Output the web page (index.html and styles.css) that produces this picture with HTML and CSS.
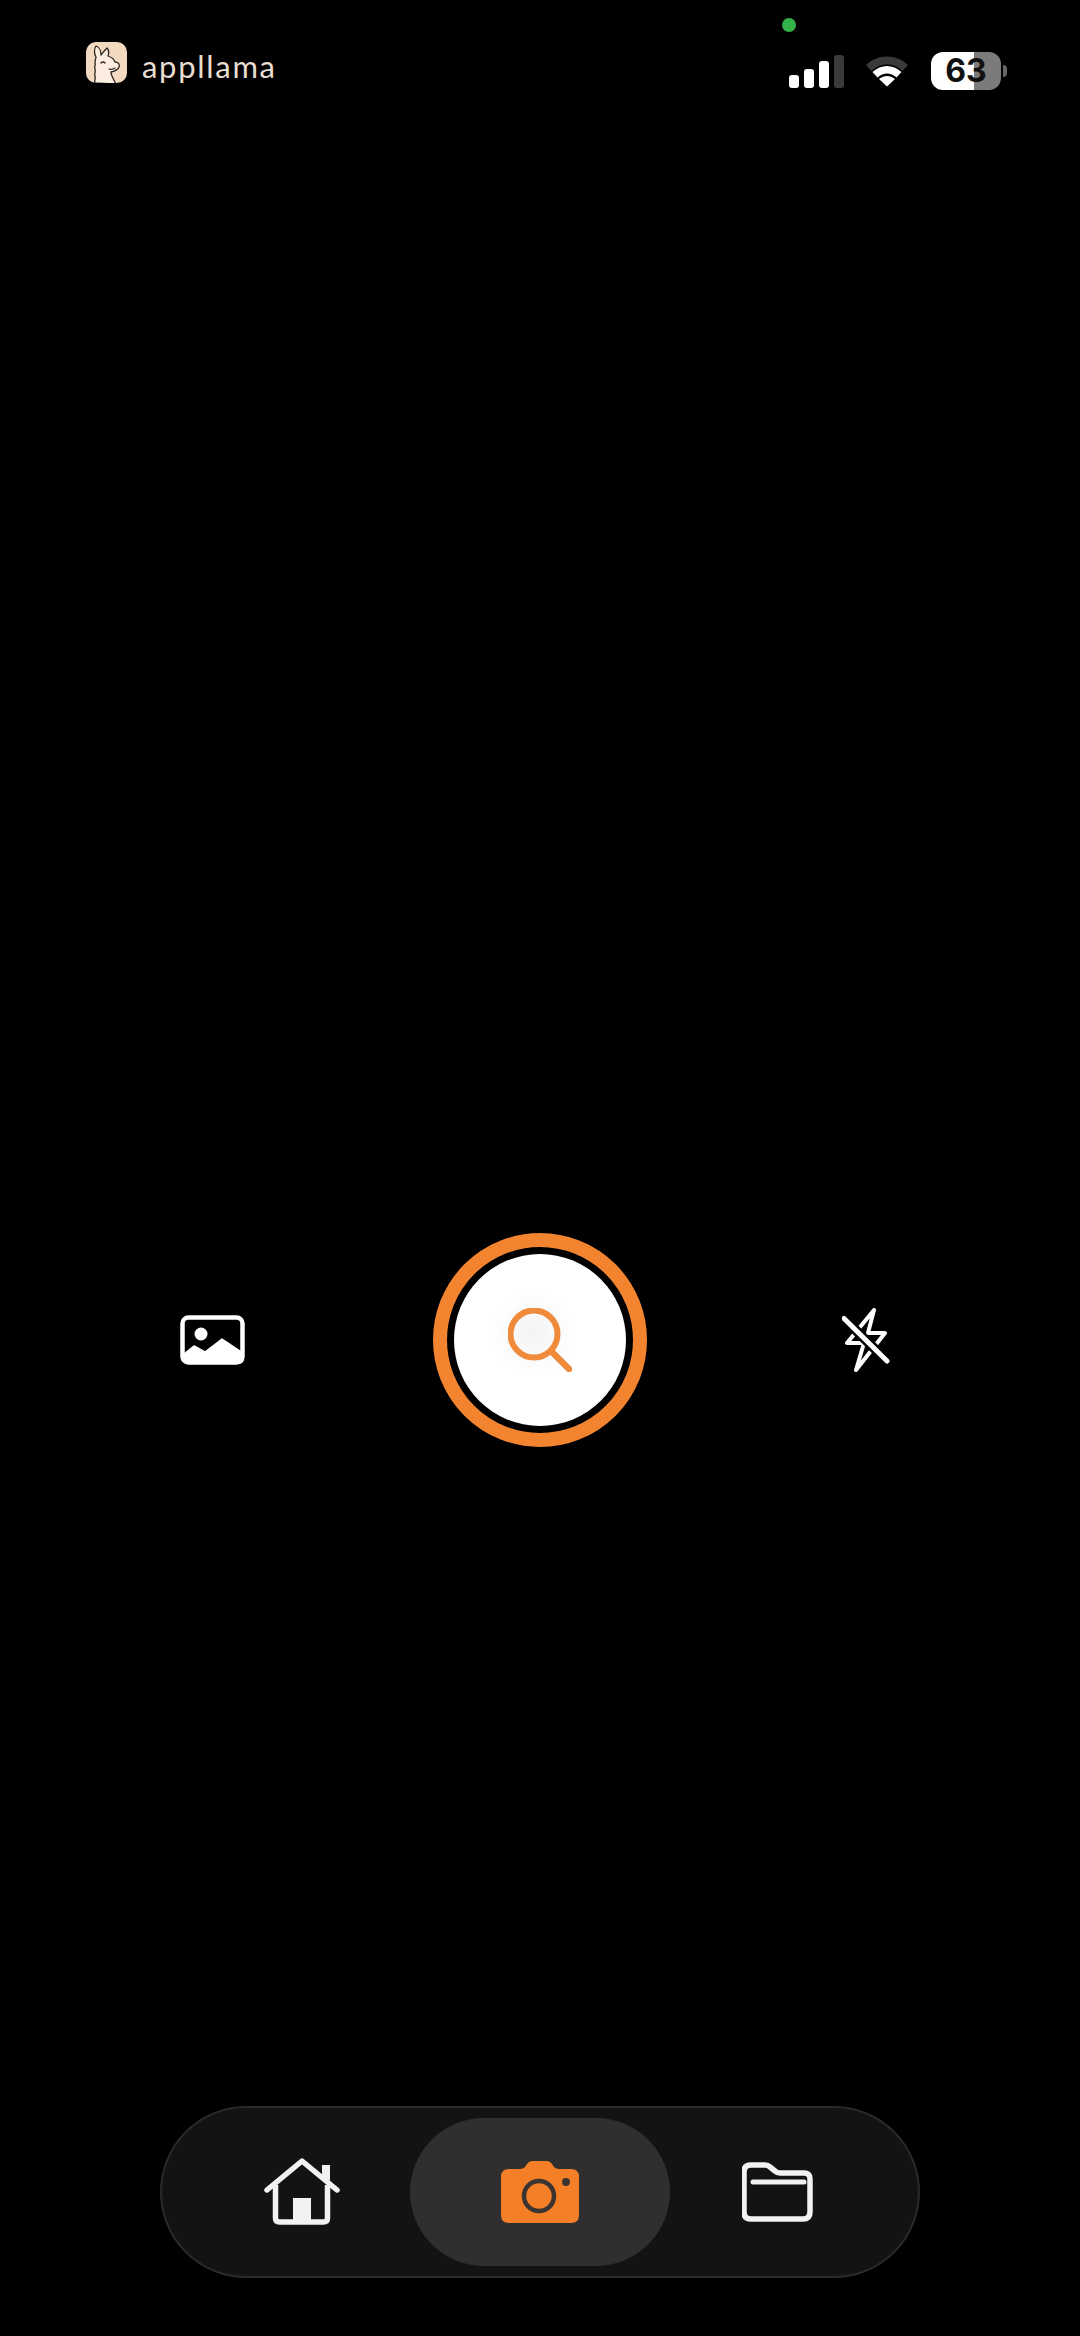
FILE: index.html
```html
<!DOCTYPE html>
<html lang="en">
  <head>
    <meta charset="UTF-8" />
    <meta name="viewport" content="width=device-width, initial-scale=1.0" />
    <title>appllama</title>
    <link rel="stylesheet" href="styles.css">
  </head>
  <body>
    <div class="screen">
      <header class="statusbar">
        <div class="brand">
          <svg class="brand-icon" width="41" height="41" viewBox="0 0 41 41">
            <rect width="41" height="41" rx="10" fill="#f3d9c0" />
            <path d="M9 41c-1-3 1-4 0-7c-1-3 1-4 0-7c-1-3 1-4 0-6c0-3 1-5 1-6c-2-3-2-8 0-11c3 1 5 5 5 9c1-1 3-4 6-7c2 2 2 5 1 8c3 1 6 3 7 6c3 0 5 2 4 5c-1 3-4 4-8 5c0 4 3 8 5 12z" fill="#fbeee0" stroke="#2e2620" stroke-width="1.300" stroke-linejoin="round" />
            <path d="M15 21q2-2 4 0M23 27q3 1 6-1" fill="none" stroke="#2e2620" stroke-width="1.300" stroke-linecap="round" />
          </svg>
          <span class="brand-name">appllama</span>
        </div>
        <div class="indicators">
          <span class="privacy-dot"></span>
          <div class="signal">
            <span class="bar bar-1"></span>
            <span class="bar bar-2"></span>
            <span class="bar bar-3"></span>
            <span class="bar bar-4"></span>
          </div>
          <svg class="wifi" width="46" height="33" viewBox="0 4 46 32">
            <path d="M2 13.500C14 2 32 2 44 13.500L38.500 19.500C29 10.500 17 10.500 7.500 19.500z" fill="#3a3a3a" />
            <path d="M8.500 20.500C17 12.500 29 12.500 37.500 20.500L32.500 26C26.500 20.500 19.500 20.500 13.500 26z" fill="#fff" />
            <path d="M15 27.500C20 23.500 26 23.500 31 27.500L23 35z" fill="#fff" />
          </svg>
          <div class="battery">
            <div class="battery-body"><span class="battery-level">63</span></div>
            <span class="battery-cap"></span>
          </div>
        </div>
      </header>

      <main class="controls">
        <button class="tool">
          <svg width="66" height="50" viewBox="0 0 66 50">
            <rect x="2.500" y="2.500" width="60" height="45" rx="6" fill="none" stroke="#fff" stroke-width="4.500" />
            <circle cx="21" cy="19" r="6.500" fill="#fff" />
            <path d="M4 39l10-8 11 6 17-13 21 14v6q0 4-4 4H8q-4 0-4-4z" fill="#fff" stroke="#fff" stroke-width="1.500" stroke-linejoin="round" />
          </svg>
        </button>
        <button class="shutter">
          <span class="shutter-face">
            <svg width="64" height="64" viewBox="0 0 64 64">
              <circle cx="26" cy="26" r="23.500" fill="none" stroke="#f08b3c" stroke-width="6" />
              <path d="M43 43l18 18" fill="none" stroke="#f08b3c" stroke-width="6.500" stroke-linecap="round" />
            </svg>
          </span>
        </button>
        <button class="tool tool-flash">
          <svg width="48" height="64" viewBox="0 0 48 64">
            <path d="M32 2L5 35h17L14 62l29-37H26z" fill="none" stroke="#fff" stroke-width="4" stroke-linejoin="round" />
            <path d="M1.500 10L45 53" fill="none" stroke="#000" stroke-width="10" />
            <path d="M2 10.500L45 53" fill="none" stroke="#fff" stroke-width="5" stroke-linecap="round" />
          </svg>
        </button>
      </main>

      <nav class="tabbar">
        <a class="tab">
          <svg width="76" height="68" viewBox="0 0 76 68">
            <path d="M3 32L38 3l35 29" fill="none" stroke="#f2f2f2" stroke-width="5.500" stroke-linecap="round" stroke-linejoin="round" />
            <path d="M11.500 27v33q0 4 4 4h44q4 0 4-4V27" fill="none" stroke="#f2f2f2" stroke-width="5.500" />
            <path d="M58 17V7h8v16z" fill="#f2f2f2" />
            <rect x="29" y="40" width="18" height="25" fill="#f2f2f2" />
          </svg>
        </a>
        <a class="tab tab-active">
          <svg width="78" height="62" viewBox="0 0 78 62">
            <path d="M8 8h11q3 0 5-2l2-3q2-3 6-3h13q4 0 6 3l2 3q2 2 5 2h12q8 0 8 8v38q0 8-8 8H8q-8 0-8-8V16q0-8 8-8z" fill="#f47f26" />
            <circle cx="38" cy="35" r="15" fill="none" stroke="#3c3430" stroke-width="4.500" />
            <circle cx="65" cy="21" r="4" fill="#3c3430" />
          </svg>
        </a>
        <a class="tab">
          <svg width="72" height="60" viewBox="0 0 72 60">
            <path d="M9 3h14q3 0 5 2l5 4q2 2 5 2h24q6 0 6 6v33q0 7-7 7H9q-7 0-7-7V10q0-7 7-7z" fill="none" stroke="#f2f2f2" stroke-width="5.500" stroke-linejoin="round" />
            <path d="M11 20h51" fill="none" stroke="#f2f2f2" stroke-width="5" stroke-linecap="round" />
          </svg>
        </a>
      </nav>
    </div>
  </body>
</html>
```

FILE: styles.css
```css
* {
  box-sizing: border-box;
}
body {
  margin: 0;
  background-color: #000;
  font-family: "Inter", sans-serif;
}
.screen {
  width: 1080px;
  height: 2336px;
  display: flex;
  flex-direction: column;
  background-color: #000;
}
button {
  background: none;
  border: 0;
  padding: 0;
}
svg {
  display: block;
}
.statusbar {
  height: 100px;
  display: flex;
  justify-content: space-between;
  padding: 42px 0 0 86px;
}
.brand {
  display: flex;
  align-items: flex-start;
  gap: 15px;
}
.brand-name {
  color: #e8ddd0;
  font-family: "Lato", sans-serif;
  font-weight: 400;
  font-size: 31px;
  line-height: 36px;
  letter-spacing: 1.7px;
  margin-top: 6px;
}
.indicators {
  position: relative;
  display: flex;
  align-items: center;
  height: 48px;
  padding: 10px 73px 0 0;
  gap: 20px;
}
.privacy-dot {
  position: absolute;
  left: -7px;
  top: -24px;
  width: 14px;
  height: 14px;
  border-radius: 50%;
  background-color: #34b24a;
}
.signal {
  display: flex;
  align-items: flex-end;
  gap: 5px;
  height: 33px;
}
.bar {
  width: 10px;
  border-radius: 3px;
  background-color: #fff;
}
.bar-1 {
  height: 13px;
}
.bar-2 {
  height: 19px;
}
.bar-3 {
  height: 27px;
}
.bar-4 {
  height: 33px;
  background-color: #3a3a3a;
}
.battery {
  display: flex;
  align-items: center;
  gap: 2px;
  height: 38px;
  margin-left: 1px;
}
.battery-body {
  width: 70px;
  height: 38px;
  border-radius: 12px;
  background: linear-gradient(to right, #fff 61%, #7b7b7b 61%);
  display: flex;
  align-items: center;
  justify-content: center;
}
.battery-level {
  color: #111;
  font-weight: 700;
  font-size: 32px;
  line-height: 38px;
}
.battery-cap {
  width: 4px;
  height: 12px;
  border-radius: 0 4px 4px 0;
  background-color: #666;
}
.controls {
  display: flex;
  align-items: center;
  height: 214px;
  margin-top: 1133px;
  padding-left: 180px;
}
.shutter {
  width: 214px;
  height: 214px;
  margin-left: 187px;
  border-radius: 50%;
  border: 14px solid #f28430;
  padding: 7px;
  background-color: #000;
}
.shutter-face {
  width: 100%;
  height: 100%;
  border-radius: 50%;
  background: radial-gradient(circle at 46% 46%, #f3f3f3, #fff 32%);
  display: flex;
  align-items: center;
  justify-content: center;
}
.tool-flash {
  margin-left: 195px;
}
.tabbar {
  width: 760px;
  height: 172px;
  margin: 659px 0 0 160px;
  padding: 10px 0;
  border: 2px solid #2a2a2a;
  border-radius: 86px;
  background-color: #131313;
  display: flex;
  align-items: center;
  justify-content: space-between;
}
.tab {
  width: 248px;
  height: 148px;
  display: flex;
  align-items: center;
  justify-content: center;
}
.tab:first-child {
  padding-left: 32px;
}
.tab:last-child {
  width: 248px;
  padding-right: 32px;
}
.tab-active {
  width: 260px;
  border-radius: 74px;
  background-color: #2f2f2f;
}
```
